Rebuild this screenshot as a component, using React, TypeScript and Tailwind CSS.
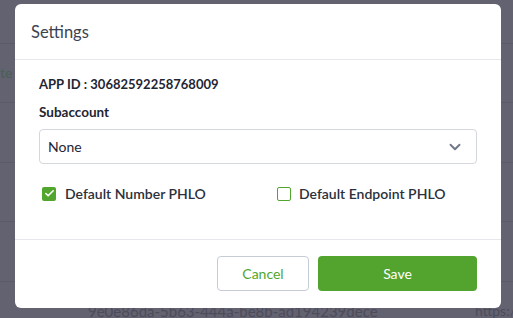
import { ChevronDown, Check } from "lucide-react";

const rows = [
  { left: "", right: "s:/" },
  { left: "te", right: "s:/" },
  { left: "", right: "s:/" },
  { left: "", right: "s:/" },
  { left: "", right: "s:/" },
  { left: "", right: "https:/", mid: "9e0e86da-5b63-444a-be8b-ad194239dece" },
];

export default function App() {
  return (
    <div className="relative w-[513px] h-[318px] overflow-hidden bg-[#636271] font-['Lato',sans-serif]">
      {/* dimmed table behind the dialog */}
      <div className="flex flex-col -mt-[16px]">
        {rows.map((r, i) => (
          <div
            key={i}
            className="h-[59.5px] shrink-0 flex items-center border-b border-[#5b5a68] text-[14px] text-[#4d4c59] whitespace-nowrap"
          >
            <span className="w-[88px] text-[#4c5f58] font-semibold">{r.left}</span>
            <span className="flex-1 text-[15px]">{r.mid}</span>
            <span className="w-[40px] pl-[2px] overflow-hidden">{r.right}</span>
          </div>
        ))}
      </div>

      <div className="absolute inset-0 pl-[15px] pt-[4px]">
        <div className="w-[486px] h-[304px] bg-white rounded-[6px] flex flex-col">
          <div className="h-[56px] flex items-center px-[16px] pt-[2px] border-b border-[#e6e7ea]">
            <span className="text-[16.5px] text-[#3b4352]">Settings</span>
          </div>

          <div className="flex-1 px-[24px] pt-[15px] border-b border-[#e6e7ea]">
            <div className="text-[13px] font-bold text-[#1f2533] leading-[18px]">APP ID : 30682592258768009</div>
            <div className="mt-[10px] text-[13.5px] font-bold text-[#1f2533] leading-[18px]">Subaccount</div>
            <div className="mt-[8px] h-[35px] flex items-center justify-between border border-[#d4d7dd] rounded-[4px] pl-[8px] pr-[12px]">
              <span className="text-[14px] text-[#1f2533]">None</span>
              <ChevronDown size={18} strokeWidth={2.5} className="text-[#6f7888]" />
            </div>
            <div className="mt-[19px] flex items-center">
              <div className="w-[238px] flex items-center pl-[3px]">
                <span className="w-[14px] h-[14px] rounded-[2px] bg-[#52a62e] flex items-center justify-center">
                  <Check size={11} strokeWidth={3.5} className="text-white" />
                </span>
                <span className="ml-[9px] text-[14px] font-semibold text-[#2b303b]">Default Number PHLO</span>
              </div>
              <div className="flex items-center">
                <span className="w-[14px] h-[14px] rounded-[2px] border-[1.5px] border-[#52a62e]" />
                <span className="ml-[8px] text-[14px] font-semibold text-[#2b303b]">Default Endpoint PHLO</span>
              </div>
            </div>
          </div>

          <div className="h-[68px] flex items-start justify-end gap-[9px] pt-[16px] pr-[24px]">
            <button className="w-[92px] h-[35px] rounded-[4px] border border-[#c6ccd4] text-[14px] text-[#52a62e]">
              Cancel
            </button>
            <button className="w-[159px] h-[35px] rounded-[4px] bg-[#53a42f] text-[14px] text-white">
              Save
            </button>
          </div>
        </div>
      </div>
    </div>
  );
}
